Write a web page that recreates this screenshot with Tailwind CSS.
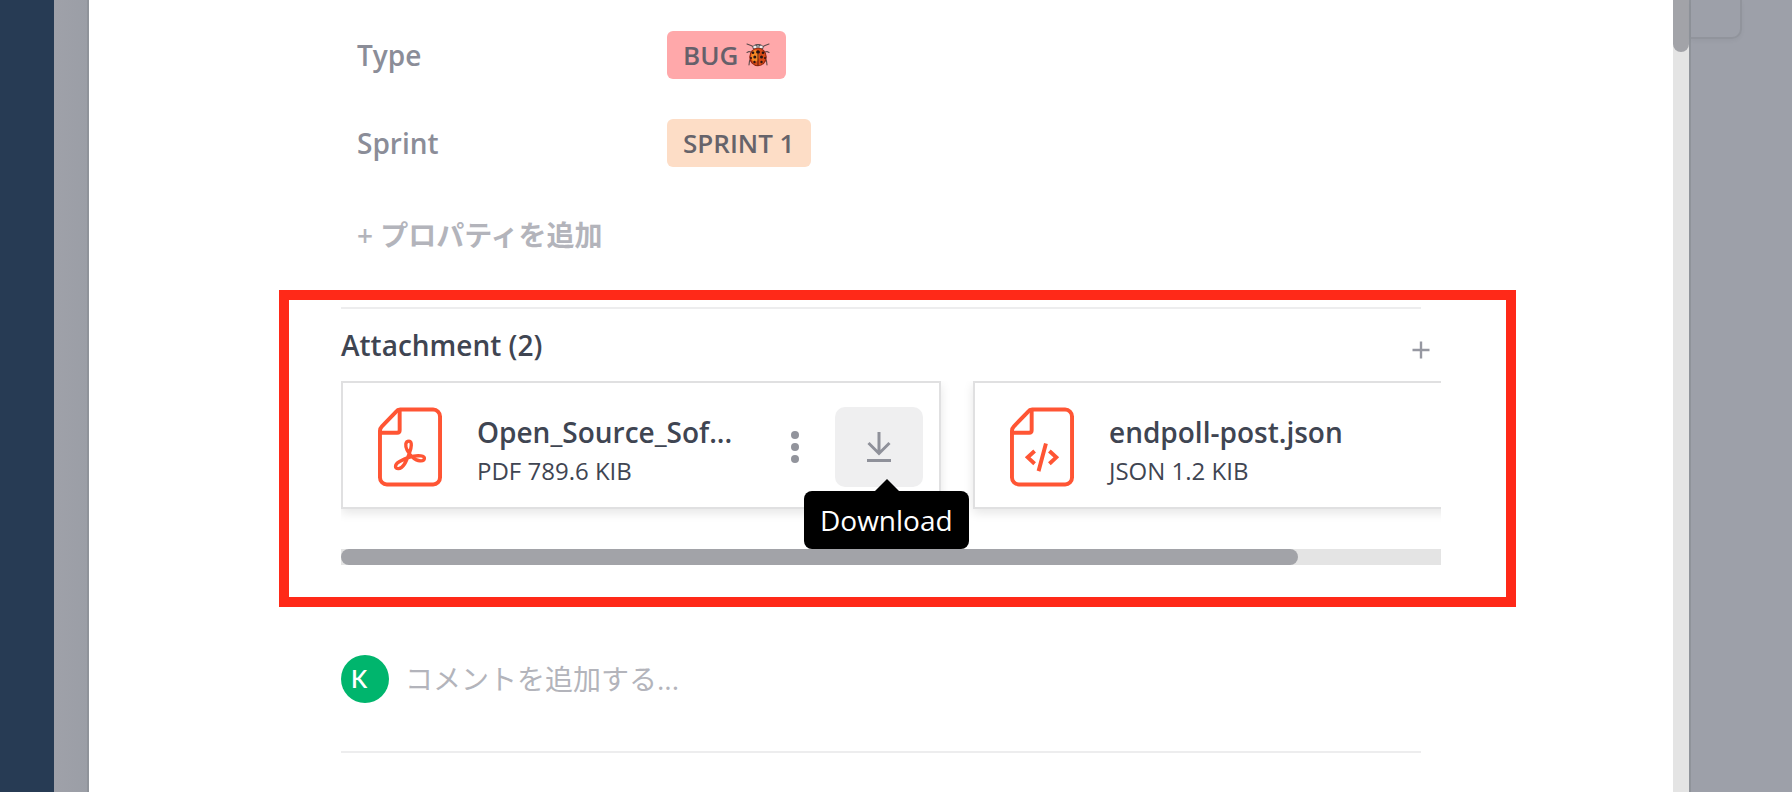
<!DOCTYPE html>
<html lang="ja">
<head>
<meta charset="utf-8">
<meta name="viewport" content="width=device-width, initial-scale=1">
<title>Task detail</title>
<script src="https://cdn.jsdelivr.net/npm/@tailwindcss/browser@4"></script>
</head>
<body class="flex h-screen overflow-hidden bg-[#9da0a9] font-['Open_Sans','Noto_Sans_CJK_JP',sans-serif] text-[28px] leading-[38px] text-[#3f4552]">
  <nav class="w-[54px] shrink-0 bg-[#273b54]" aria-label="Sidebar"></nav>
  <div class="w-[33px] shrink-0 bg-linear-to-r from-[#9fa1a9] to-[#9b9ea6]"></div>

  <main class="flex min-w-0 flex-1 border-x-2 border-[#8f939a] bg-white">
    <div class="min-w-0 flex-1">
      <div class="mx-auto max-w-[1080px] pt-[31px]">
        <dl class="flex flex-col gap-10 pl-4 font-semibold">
          <div class="flex h-12 items-center">
            <dt class="w-[310px] text-[#8b8d98]">Type</dt>
            <dd class="flex h-12 items-center gap-2 rounded-md bg-[#ffa8aa] px-4 text-[26px] text-[#66606a]">BUG
              <svg class="size-6" viewBox="0 0 24 24" fill="none" role="img" aria-label="Ladybug">
                <g stroke="#5b4a4b" stroke-width="1.1" stroke-linecap="round" stroke-linejoin="round">
                  <path d="M8 4 5 2.500 1 1M16 4l3-1.500L23 1M5 9 3 8.500 1 9.500M19 9l2-.5 2 1M5 15l-1.500 3L3 22M19 15l1.500 3L21 22"/>
                </g>
                <ellipse cx="12" cy="4.500" rx="5.500" ry="3.500" fill="#494346"/>
                <ellipse cx="9" cy="4" rx="1.800" ry="1.600" fill="#eee"/>
                <ellipse cx="15" cy="4" rx="1.800" ry="1.600" fill="#eee"/>
                <ellipse cx="12" cy="3.800" rx="1.600" ry="2" fill="#9a9699"/>
                <ellipse cx="12" cy="14" rx="8.800" ry="9.200" fill="#8f2410"/>
                <ellipse cx="12" cy="14" rx="7.600" ry="8.400" fill="#d84c17"/>
                <ellipse cx="9" cy="13" rx="3.800" ry="6" fill="#f58a26"/>
                <path d="M12 7v16" stroke="#5a1d10" stroke-width="1"/>
                <g fill="#2a1412">
                  <ellipse cx="12" cy="9" rx="2" ry="1.500"/>
                  <circle cx="7" cy="9.800" r="1.300"/><circle cx="17" cy="9.800" r="1.300"/>
                  <circle cx="8.800" cy="14" r="1.500"/><circle cx="15.500" cy="14" r="1.500"/>
                  <circle cx="5" cy="15" r="1"/><circle cx="19" cy="15" r="1"/>
                  <circle cx="8.500" cy="19" r="1.200"/><circle cx="15.500" cy="19" r="1.200"/>
                </g>
              </svg>
            </dd>
          </div>
          <div class="flex h-12 items-center">
            <dt class="w-[310px] text-[#8b8d98]">Sprint</dt>
            <dd class="flex h-12 items-center rounded-md bg-[#fdddc6] px-4 text-[26px] text-[#66636a]">SPRINT 1</dd>
          </div>
        </dl>
        <button type="button" class="mt-11 ml-4 block h-12 font-semibold text-[#b3b4bb]">+ プロパティを追加</button>

        <section class="mt-[31px] -mr-[95px] -ml-[62px] border-10 border-[#ff2918] pt-[7px] pr-[65px] pb-8 pl-[52px]" aria-labelledby="attachments">
          <hr class="mr-5 border-t-2 border-[#ededee]">
          <div class="flex h-[72px] items-center justify-between">
            <h2 id="attachments" class="font-semibold">Attachment (2)</h2>
            <button type="button" aria-label="Add attachment" class="flex w-10 justify-center pt-2.5">
              <svg class="size-[18px]" viewBox="0 0 18 18" stroke="#9698a1" stroke-width="2.400" aria-hidden="true"><path d="M9 .5v17M.5 9h17"/></svg>
            </button>
          </div>

          <ul class="flex gap-8 overflow-hidden pb-10">
            <li class="flex h-32 w-[600px] shrink-0 items-center border-2 border-[#e0e0e1] pt-1 pr-4 pl-[35px] shadow-[0_4px_10px_rgba(0,0,0,0.1)]">
              <svg class="h-20 w-16 shrink-0" viewBox="0 1 65 80" fill="none" stroke="#ff5534" stroke-width="4" stroke-linejoin="round" aria-hidden="true">
                <path d="M22.500 3H56a7 7 0 0 1 7 7v62a7 7 0 0 1-7 7H9a7 7 0 0 1-7-7V24.500Q2 22 4 20L18 5.500Q20 3 22.500 3Z"/>
                <path d="M22 4v20q0 2.500-2.500 2.500H3"/>
                <path stroke-width="3.400" d="M31.500 35c-4 0-4 5-2 9 2.500 5 8 11 13 11 6 .5 6-4.500 1-5-7-.8-16 2.500-22 6-5 3-4.500 7-1 7 6 .3 9-10 11.500-16 2-5 3-12-.5-12Z"/>
              </svg>
              <div class="ml-[35px] min-w-0 flex-1 pt-2.5">
                <p class="font-semibold">Open_Source_Sof...</p>
                <p class="text-2xl leading-10">PDF 789.6 KIB</p>
              </div>
              <button type="button" aria-label="More actions" class="mr-9 flex w-2 flex-col gap-1">
                <span class="size-2 rounded-full bg-[#92949c]"></span>
                <span class="size-2 rounded-full bg-[#92949c]"></span>
                <span class="size-2 rounded-full bg-[#92949c]"></span>
              </button>
              <div class="relative">
                <button type="button" aria-label="Download file" aria-describedby="download-tip" class="flex h-20 w-22 items-center justify-center rounded-[10px] bg-[#efeff0]">
                  <svg class="h-8 w-6" viewBox="0 0 24 32" fill="none" stroke="#8f919a" stroke-width="3" aria-hidden="true"><path d="M12 1v21M1.500 12 12 22.500 22.500 12M0 29.500h24"/></svg>
                </button>
                <div id="download-tip" role="tooltip" class="absolute top-21 -left-[31px] z-10 rounded-lg bg-black px-4 py-2.5 text-white">
                  <svg class="absolute bottom-full left-[71px] h-3 w-6" viewBox="0 0 24 12" aria-hidden="true"><path d="M0 12 12 0l12 12z"/></svg>
                  Download
                </div>
              </div>
            </li>
            <li class="flex h-32 w-[600px] shrink-0 items-center border-2 border-[#e0e0e1] pt-1 pr-4 pl-[35px] shadow-[0_4px_10px_rgba(0,0,0,0.1)]">
              <svg class="h-20 w-16 shrink-0" viewBox="0 1 65 80" fill="none" stroke="#ff5534" stroke-width="4" stroke-linejoin="round" aria-hidden="true">
                <path d="M22.500 3H56a7 7 0 0 1 7 7v62a7 7 0 0 1-7 7H9a7 7 0 0 1-7-7V24.500Q2 22 4 20L18 5.500Q20 3 22.500 3Z"/>
                <path d="M22 4v20q0 2.500-2.500 2.500H3"/>
                <path stroke-linejoin="miter" d="m25 45-7 6.500 7 6.500M40 45l7 6.500-7 6.500M36.500 37.500 29 65.500"/>
              </svg>
              <div class="ml-[35px] min-w-0 flex-1 pt-2.5">
                <p class="font-semibold">endpoll-post.json</p>
                <p class="text-2xl leading-10">JSON 1.2 KIB</p>
              </div>
            </li>
          </ul>
          <div class="bg-[#e4e4e4]"><div class="h-4 w-[87%] rounded-full bg-[#a2a3a8]"></div></div>
        </section>

        <div class="mt-12 flex items-center gap-4">
          <span class="flex size-12 shrink-0 items-center rounded-full bg-[#00b56d] pl-2.5 font-['Lato',sans-serif] text-2xl font-semibold text-white">K</span>
          <input type="text" aria-label="コメント" placeholder="コメントを追加する..." class="h-12 min-w-0 flex-1 outline-none placeholder:text-[#b3b4bb]">
        </div>
        <hr class="mt-12 border-t-2 border-[#ededee]">
      </div>
    </div>
    <div class="w-4 shrink-0 bg-[#e4e4e4]"><div class="h-[52px] rounded-b-full bg-[#a2a3a8]"></div></div>
  </main>

  <div class="w-[101px] shrink-0">
    <div class="h-[39px] w-[51px] rounded-br-[10px] border-r-2 border-b-2 border-[#91949c] shadow-[0_2px_4px_rgba(0,0,0,0.04)]"></div>
  </div>
</body>
</html>
